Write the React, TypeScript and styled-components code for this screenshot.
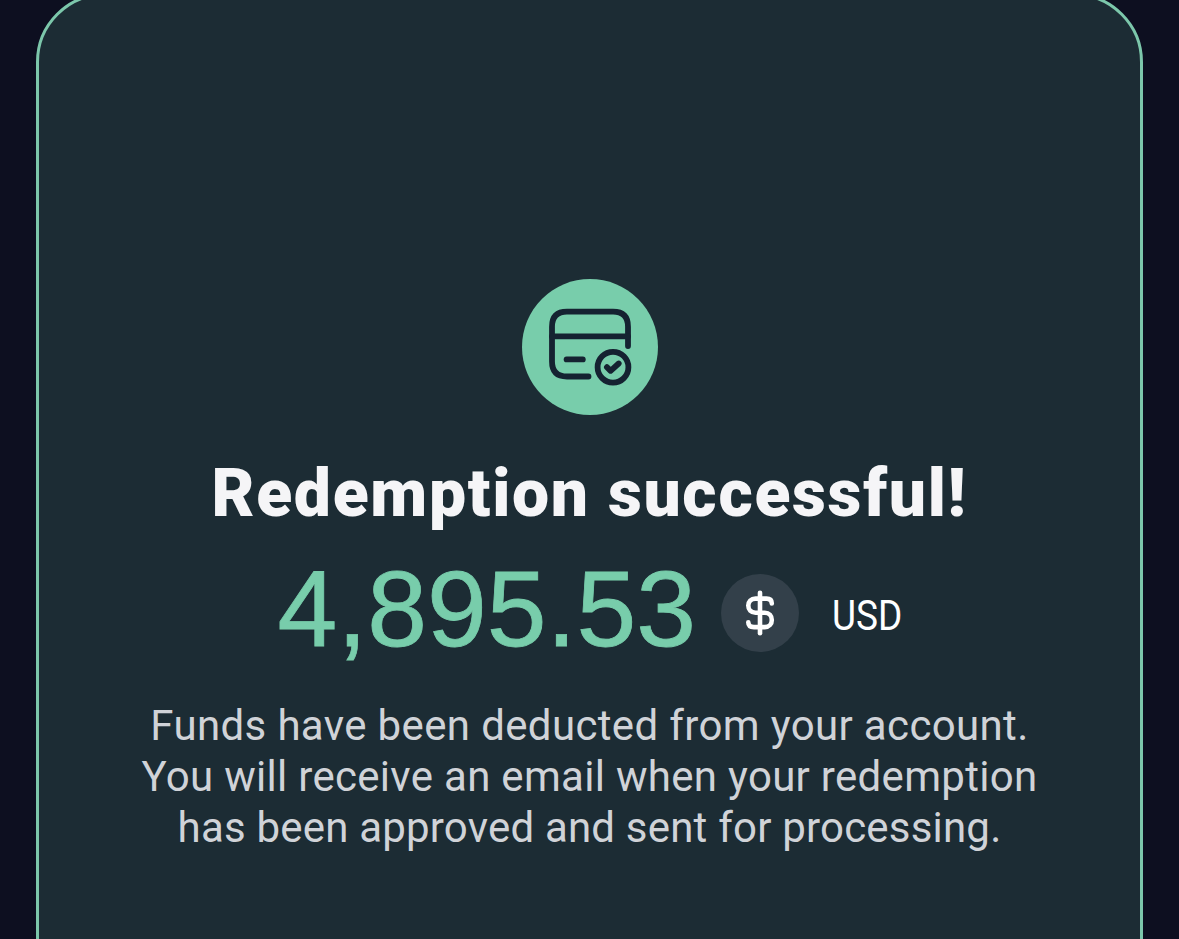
import React from "react";
import styled, { createGlobalStyle } from "styled-components";

const GlobalStyle = createGlobalStyle`
  * {
    box-sizing: border-box;
  }
  body {
    margin: 0;
    background: #0d0f20;
    overflow: hidden;
  }
`;

const messageLines = [
  { text: "Funds have been deducted from your account.", spacing: 0.36 },
  { text: "You will receive an email when your redemption", spacing: 0.3 },
  { text: "has been approved and sent for processing.", spacing: 0.2 },
];

const CardCheckIcon: React.FC = () => (
  <svg
    width="136"
    height="136"
    viewBox="1 0.8 136 136"
    fill="none"
    stroke="#152231"
    strokeWidth="5.8"
    strokeLinecap="round"
    strokeLinejoin="round"
  >
    <path d="M67.5 98.3H46Q31 98.3 31 83.3V48.5Q31 33.5 46 33.5H92Q107 33.5 107 48.5V67.8" />
    <path d="M31 58.2H107" />
    <path d="M45.6 81.2H61.8" />
    <circle cx="92" cy="89" r="15.4" />
    <path d="M85.9 89L89.6 92.6L97.7 85.3" />
  </svg>
);

const DollarIcon: React.FC = () => (
  <svg
    width="78"
    height="78"
    viewBox="0 0 78 78"
    fill="none"
    stroke="#ffffff"
    strokeWidth="4.6"
    strokeLinecap="round"
    strokeLinejoin="round"
  >
    <path d="M39 18.8V59.2" />
    <path d="M50.8 29.5C50.8 26 48.5 24.6 45.5 24.6H34.5C30 24.6 27.3 27.6 27.3 31.6C27.3 35.7 30 38.7 34.5 38.7H43.8C48.2 38.7 50.8 41.7 50.8 45.9C50.8 50 48.2 53.1 43.8 53.1H33C29.5 53.1 27.3 51.5 27.3 48.3" />
  </svg>
);

const App: React.FC = () => {
  return (
    <>
      <GlobalStyle />
      <Page>
        <Card>
          <StatusBadge>
            <CardCheckIcon />
          </StatusBadge>
          <Title>Redemption successful!</Title>
          <AmountRow>
            <Amount>4,895.53</Amount>
            <CurrencyBadge>
              <DollarIcon />
            </CurrencyBadge>
            <Currency>USD</Currency>
          </AmountRow>
          <Message>
            {messageLines.map((line) => (
              <MessageLine key={line.text} $spacing={line.spacing}>
                {line.text}
              </MessageLine>
            ))}
          </Message>
        </Card>
      </Page>
    </>
  );
};

const Page = styled.main`
  display: flex;
  justify-content: center;
  height: 939px;
  overflow: hidden;
  background: #0d0f20;
  font-family: Roboto, "Liberation Sans", sans-serif;
`;

const Card = styled.section`
  display: flex;
  flex-direction: column;
  align-items: center;
  flex-shrink: 0;
  width: 1107px;
  height: 1100px;
  margin-top: -7px;
  padding-top: 283px;
  border: 3px solid #7cc7ab;
  border-radius: 69px;
  background: #1c2c34;
`;

const StatusBadge = styled.div`
  width: 136px;
  height: 136px;
  margin-left: 1px;
  flex-shrink: 0;
  border-radius: 50%;
  background: #78cdab;

  svg {
    display: block;
  }
`;

const Title = styled.h1`
  margin: 39px 0 0;
  color: #f5f5f7;
  font-size: 66px;
  font-weight: 900;
  line-height: 80px;
  letter-spacing: 1.7px;
  white-space: nowrap;
`;

const AmountRow = styled.div`
  display: flex;
  align-items: center;
  margin-top: 13px;
  height: 124px;
`;

const Amount = styled.span`
  width: 418px;
  color: #78cdab;
  font-family: "Liberation Sans", Arial, sans-serif;
  font-size: 107.5px;
  line-height: 126px;
  -webkit-text-stroke: 0.8px #78cdab;
`;

const CurrencyBadge = styled.div`
  width: 78px;
  height: 78px;
  margin: 8px 0 0 25px;
  border-radius: 50%;
  background: #33404a;

  svg {
    display: block;
  }
`;

const Currency = styled.span`
  width: 70px;
  margin: 12px 0 0 33px;
  color: #ffffff;
  font-size: 43px;
  line-height: 50px;
  transform: scaleX(0.86);
  transform-origin: left center;
`;

const Message = styled.p`
  margin: 29px 0 0;
  color: #d0d3d8;
  font-size: 42px;
  line-height: 51px;
  text-align: center;
`;

const MessageLine = styled.span<{ $spacing: number }>`
  display: block;
  letter-spacing: ${({ $spacing }) => $spacing}px;
  white-space: nowrap;
`;

export default App;
